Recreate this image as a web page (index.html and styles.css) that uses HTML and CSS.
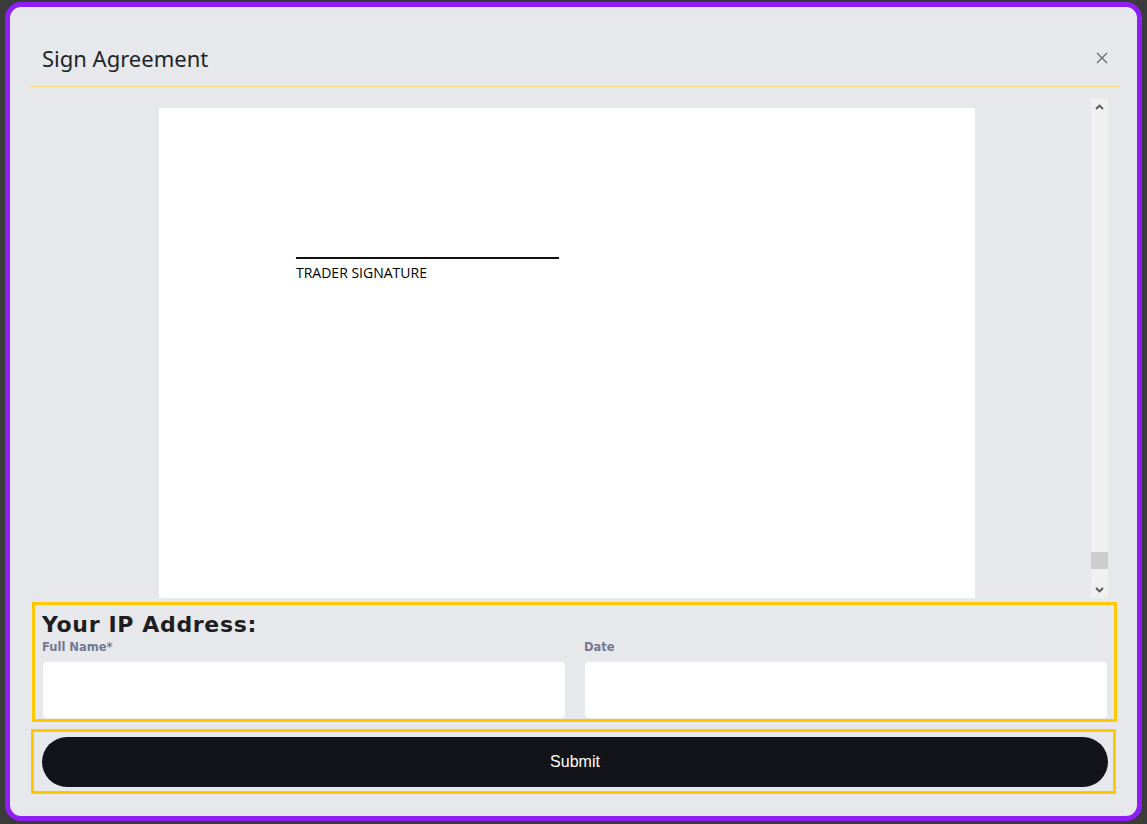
FILE: index.html
```html
<!DOCTYPE html>
<html>
<head>
    <title>Sign Agreement</title>
    <link rel="stylesheet" href="styles.css">
</head>
<body>
    <div class="modal">
        <!-- Header -->
        <div class="modal-header">
            <div class="modal-title">Sign Agreement</div>
            <button class="close-btn" aria-label="Close">
                <svg width="12" height="12" viewBox="0 0 12 12"><path d="M1 1L11 11M11 1L1 11" stroke="#6b6b6b" stroke-width="1.3" fill="none"/></svg>
            </button>
        </div>

        <!-- Agreement document -->
        <div class="doc-view">
            <div class="doc-area">
                <div class="doc-page">
                    <div class="signature">
                        <div class="sig-line"></div>
                        <div class="sig-label">TRADER SIGNATURE</div>
                    </div>
                </div>
            </div>
            <div class="scrollbar">
                <div class="scroll-btn">
                    <svg width="9" height="6" viewBox="0 0 9 6"><path d="M1 5L4.5 1.5L8 5" stroke="#555" stroke-width="1.8" fill="none"/></svg>
                </div>
                <div class="scroll-track"></div>
                <div class="scroll-thumb"></div>
                <div class="scroll-rest"></div>
                <div class="scroll-btn">
                    <svg width="9" height="6" viewBox="0 0 9 6"><path d="M1 1L4.5 4.5L8 1" stroke="#555" stroke-width="1.8" fill="none"/></svg>
                </div>
            </div>
        </div>

        <!-- Signer details -->
        <div class="sign-box">
            <h2 class="ip-title">Your IP Address:</h2>
            <div class="fields">
                <div class="field">
                    <label>Full Name*</label>
                    <input type="text">
                </div>
                <div class="field">
                    <label>Date</label>
                    <input type="text">
                </div>
            </div>
        </div>

        <div class="submit-box">
            <button class="submit-btn">Submit</button>
        </div>
    </div>
</body>
</html>
```

FILE: styles.css
```css
html, body {
    margin: 0;
    padding: 0;
}
body {
    background-color: #3b3b3b;
    font-family: "Noto Sans", sans-serif;
    overflow: hidden;
}
.modal {
    margin: 2px 5px 3px 5px;
    border: 5px solid #8e1ff6;
    border-radius: 16px;
    background-color: #e7e8ec;
    padding-bottom: 22px;
    display: flex;
    flex-direction: column;
}
.modal-header {
    margin: 0 17px 0 20px;
    padding: 36px 12px 13px 12px;
    border-bottom: 1px solid #f6d37e;
    display: flex;
    justify-content: space-between;
    align-items: center;
}
.modal-title {
    font-size: 22px;
    line-height: 30px;
    color: #212529;
}
.close-btn {
    background: none;
    border: none;
    padding: 0;
    width: 12px;
    height: 12px;
    display: flex;
    cursor: pointer;
}
/* Document viewer */
.doc-view {
    margin: 11px 29px 0 30px;
    height: 500px;
    display: flex;
    overflow: hidden;
}
.doc-area {
    flex: 1;
    padding: 10px 0 0 119px;
}
.doc-page {
    width: 816px;
    height: 600px;
    background-color: white;
    position: relative;
}
.signature {
    position: absolute;
    left: 137px;
    top: 149px;
}
.sig-line {
    width: 263px;
    height: 2px;
    background-color: #111;
}
.sig-label {
    font-family: "Open Sans", sans-serif;
    font-size: 14px;
    line-height: 28px;
    color: #000;
}
.scrollbar {
    width: 17px;
    background-color: #f0f0f0;
    display: flex;
    flex-direction: column;
}
.scroll-btn {
    height: 17px;
    display: flex;
    align-items: center;
    justify-content: center;
}
.scroll-track {
    flex: 1;
}
.scroll-thumb {
    height: 17px;
    background-color: #cdcdcd;
}
.scroll-rest {
    height: 12px;
}
/* Signer details */
.sign-box {
    margin: 4px 20px 0 22px;
    border: 3px solid #ffc800;
    padding: 7px 8px 1px 7px;
}
.ip-title {
    margin: 0;
    font-family: "DejaVu Sans", sans-serif;
    font-weight: bold;
    font-size: 22px;
    line-height: 26px;
    letter-spacing: 0.65px;
    color: #1d1e22;
}
.fields {
    display: grid;
    grid-template-columns: 1fr 1fr;
    gap: 20px;
    margin-top: 1px;
}
.field label {
    display: block;
    font-family: "DejaVu Sans", sans-serif;
    font-weight: bold;
    font-size: 11.5px;
    line-height: 16px;
    color: #737890;
    margin-bottom: 7px;
}
.field input {
    display: block;
    box-sizing: border-box;
    width: 100%;
    height: 56px;
    margin-left: 1px;
    border: none;
    border-radius: 4px;
    background-color: white;
}
.submit-box {
    margin: 7px 21px 0 21px;
    border: 3px solid #ffc800;
    padding: 5px 5px 4px 8px;
}
.submit-btn {
    display: block;
    width: 100%;
    height: 50px;
    border: none;
    border-radius: 25px;
    background-color: #131419;
    color: white;
    font-family: "Liberation Sans", sans-serif;
    font-size: 16px;
    cursor: pointer;
}
```
